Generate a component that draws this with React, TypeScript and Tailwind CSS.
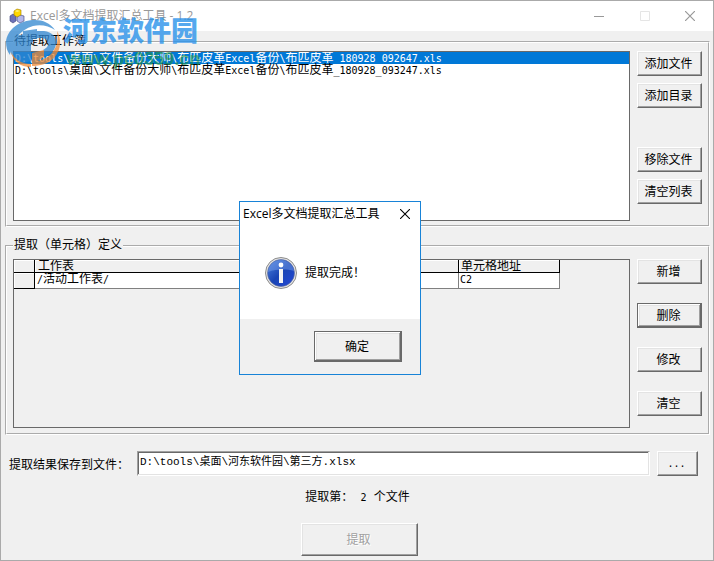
import { Fragment, useState } from "react";
import clsx from "clsx";

const FILES = [
  "D:\\tools\\桌面\\文件备份大师\\布匹皮革Excel备份\\布匹皮革_180928_092647.xls",
  "D:\\tools\\桌面\\文件备份大师\\布匹皮革Excel备份\\布匹皮革_180928_093247.xls",
];

const uiFont =
  "font-['Open_Sans','Noto_Sans_CJK_SC',sans-serif] text-xs leading-4";

// Latin glyphs are half the width of the Chinese ones
function MonoText({ text }: { text: string }) {
  return text.split(/([\x21-\x7e]+)/).map((part, i) =>
    i % 2 ? (
      <span key={i} className="font-['DejaVu_Sans_Mono',monospace] text-[10px]">
        {part}
      </span>
    ) : (
      <Fragment key={i}>{part}</Fragment>
    ),
  );
}

interface PushButtonProps {
  text: string;
  classNames?: string;
  focused?: boolean;
  disabled?: boolean;
}

function PushButton({ text, classNames, focused, disabled }: PushButtonProps) {
  return (
    <button
      type="button"
      disabled={disabled}
      className={clsx(
        "shrink-0 border bg-[#f0f0f0] pr-0.5",
        focused
          ? "border-[#696969] shadow-[inset_-1px_-1px_#696969,inset_1px_1px_#fff,inset_-2px_-2px_#a0a0a0,inset_2px_2px_#e3e3e3]"
          : "border-t-white border-r-[#696969] border-b-[#696969] border-l-white shadow-[inset_-1px_-1px_#a0a0a0,inset_1px_1px_#e3e3e3]",
        disabled && "text-[#a0a0a0] [text-shadow:1px_1px_#fff]",
        classNames,
      )}
    >
      {text}
    </button>
  );
}

function AppIcon() {
  return (
    <svg viewBox="0 0 16 16" className="h-4 w-4" aria-hidden="true">
      <path d="M1 8l3-2 3 2v5l-3 2-3-2z" fill="#6d72b8" stroke="#3b3f78" strokeWidth=".6" />
      <path d="M8 9l3-2 4 1v5l-4 2-3-2z" fill="#b4b8ea" stroke="#3b3f78" strokeWidth=".6" />
      <path d="M5 3l3-2 4 1v5L8 9 5 7z" fill="#ffd800" stroke="#a07800" strokeWidth=".6" />
      <path d="M6 3l2-1 3 1-3 1z" fill="#fff27a" />
    </svg>
  );
}

function TitleBar() {
  return (
    <header className="flex h-[30px] items-center bg-white pl-2 text-[#999]">
      <AppIcon />
      <h1 className={clsx(uiFont, "ml-[5px] grow")}>
        Excel多文档提取汇总工具 - 1.2
      </h1>
      <button type="button" aria-label="最小化" className="flex h-full w-[46px] items-center justify-center">
        <svg viewBox="0 0 10 10" className="h-2.5 w-2.5" stroke="#999">
          <path d="M0 5.5h10" />
        </svg>
      </button>
      <button type="button" aria-label="最大化" disabled className="flex h-full w-[45px] items-center justify-center">
        <svg viewBox="0 0 10 10" className="h-2.5 w-2.5" fill="none" stroke="#e5e5e5">
          <path d="M.5 .5h9v9h-9z" />
        </svg>
      </button>
      <button type="button" aria-label="关闭" className="flex h-full w-[46px] items-center justify-center">
        <svg viewBox="0 0 10 10" className="h-2.5 w-2.5" stroke="#999" strokeWidth="1.2">
          <path d="M0 0l10 10M10 0L0 10" />
        </svg>
      </button>
    </header>
  );
}

function Watermark() {
  return (
    <div className="pointer-events-none absolute top-2.5 left-0 flex" aria-hidden="true">
      <svg viewBox="0 0 62 60" className="h-[60px] w-[62px] opacity-75">
        <path d="M34 9C18 9 6 19 5 31c0 5 1 9 4 13 1-14 10-25 23-29 8-2 16 0 22 4C49 12 42 9 34 9z" fill="#2f86d0" />
        <path d="M12 25l20-3v9l-8 2v20c-8-2-13-7-15-13 0-6 0-11 3-15z" fill="#2f86d0" />
        <path d="M22 20l14-2v10h-6v22l-8 2z" fill="#2f86d0" />
        <path d="M30 20h13c8 1 13 6 12 13-1 7-6 11-13 13v-7c4-2 6-5 5-8-1-3-4-4-8-4h-9z" fill="#2f86d0" />
        <path d="M56 20c5 9 4 19-3 27-6 6-14 8-22 8v-4c10-1 18-5 22-12 4-6 4-12 3-19z" fill="#f08a35" />
        <path d="M10 41c4 8 11 12 20 12v3C19 56 12 50 10 41z" fill="#f08a35" />
        <path d="M31 42l12-3v7l-12 8z" fill="#f08a35" />
      </svg>
      <div className="flex flex-col pt-1">
        <span className="font-['Noto_Sans_CJK_SC',sans-serif] text-[27px] leading-[30px] font-black text-[#2b93ea] opacity-80">
          河东软件园
        </span>
        <span className="mt-1 ml-1 font-['Liberation_Sans',sans-serif] text-lg leading-5 font-bold text-[#239245] opacity-60">
          www.pc0359.cn
        </span>
      </div>
    </div>
  );
}

function FileGroup() {
  const [selected, setSelected] = useState(0);

  return (
    <fieldset className="flex min-w-0 gap-[7px] border-2 border-white px-1.5 pt-[3px] pb-1 [border-style:groove]">
      <legend className="px-px leading-[13px]">待提取工作簿</legend>
      <ul
        role="listbox"
        aria-label="待提取工作簿"
        className="h-[170px] min-w-0 grow overflow-hidden border border-[#696969] bg-white leading-3"
      >
        {FILES.map((file, i) => (
          <li
            key={file}
            role="option"
            aria-selected={i === selected}
            onClick={() => setSelected(i)}
            className={clsx(
              "h-3 pl-px whitespace-nowrap",
              i === selected && "bg-[#0078d7] text-white",
            )}
          >
            <MonoText text={file} />
          </li>
        ))}
      </ul>
      <div className="flex w-[65px] shrink-0 flex-col gap-[7px]">
        <PushButton text="添加文件" classNames="h-[25px]" />
        <PushButton text="添加目录" classNames="h-[25px]" />
        <PushButton text="移除文件" classNames="mt-8 h-[25px]" />
        <PushButton text="清空列表" classNames="h-[25px]" />
      </div>
    </fieldset>
  );
}

function CellGroup() {
  return (
    <fieldset className="mt-3 flex min-w-0 gap-[7px] border-2 border-white px-1.5 pt-[7px] pb-[5px] [border-style:groove]">
      <legend className="px-px leading-[13px]">提取（单元格）定义</legend>
      <div className="h-[169px] min-w-0 grow overflow-hidden border border-[#696969]">
        <table className="table-fixed border-separate border-spacing-0 text-left leading-3">
          <colgroup>
            <col className="w-[21px]" />
            <col className="w-[424px]" />
            <col className="w-[101px]" />
          </colgroup>
          <thead>
            <tr className="h-[13px]">
              <th className="border-r border-b border-black p-0 shadow-[inset_1px_1px_#fff]" />
              <th className="border-r border-b border-black p-0 pl-[3px] font-normal shadow-[inset_1px_1px_#fff]">
                工作表
              </th>
              <th className="border-r border-b border-black p-0 pl-0.5 font-normal shadow-[inset_1px_1px_#fff]">
                单元格地址
              </th>
            </tr>
          </thead>
          <tbody>
            <tr className="h-4">
              <td className="border-r border-b border-black p-0 shadow-[inset_1px_1px_#fff]" />
              <td className="border-r border-b border-[#808080] bg-white p-0 pl-0.5 align-top">
                <MonoText text="/活动工作表/" />
              </td>
              <td className="border-r border-b border-[#808080] bg-white p-0 pl-px align-top">
                <MonoText text="C2" />
              </td>
            </tr>
          </tbody>
        </table>
      </div>
      <div className="flex w-[65px] shrink-0 flex-col gap-[19px]">
        <PushButton text="新增" classNames="h-[25px]" />
        <PushButton text="删除" classNames="h-[25px]" focused />
        <PushButton text="修改" classNames="h-[25px]" />
        <PushButton text="清空" classNames="h-[25px]" />
      </div>
    </fieldset>
  );
}

function InfoIcon() {
  return (
    <svg viewBox="0 0 32 32" className="h-8 w-8" aria-hidden="true">
      <defs>
        <linearGradient id="ball" x1="0" y1="0" x2="1" y2="1">
          <stop offset="0" stopColor="#4f84e0" />
          <stop offset=".5" stopColor="#1a45b4" />
          <stop offset="1" stopColor="#2247d8" />
        </linearGradient>
      </defs>
      <circle cx="16" cy="16" r="15.5" fill="#e4e4e4" stroke="#8c8c8c" />
      <circle cx="16" cy="16" r="13.5" fill="url(#ball)" stroke="#5a6a9a" strokeWidth=".6" />
      <path d="M3 15C4 7 10 3 16 3c7 0 12 5 13 11-8-2-17-2-26 1z" fill="#7ea6ee" opacity=".45" />
      <circle cx="16" cy="8" r="2.4" fill="#fff" />
      <path d="M14 12h4v14h-4z" fill="#f4f4f4" />
    </svg>
  );
}

function MessageDialog() {
  return (
    <div
      role="dialog"
      aria-labelledby="dialog-title"
      className={clsx(
        uiFont,
        "absolute top-[200px] left-[238px] flex w-[182px] flex-col border border-[#1883d7] bg-[#f0f0f0]",
      )}
    >
      <div className="flex h-6 items-center justify-between bg-white pl-[3px]">
        <h2 id="dialog-title" className="whitespace-nowrap">
          Excel多文档提取汇总工具
        </h2>
        <button type="button" aria-label="关闭" className="flex h-6 w-[31px] items-center justify-center">
          <svg viewBox="0 0 10 10" className="h-2.5 w-2.5" stroke="#000" strokeWidth="1.1">
            <path d="M0 0l10 10M10 0L0 10" />
          </svg>
        </button>
      </div>
      <div className="flex h-[93px] items-center gap-2 bg-white pl-[25px]">
        <InfoIcon />
        <p>提取完成！</p>
      </div>
      <div className="flex justify-end py-3 pr-[18px]">
        <PushButton text="确定" classNames="h-[31px] w-[88px]" focused />
      </div>
    </div>
  );
}

export default function App() {
  return (
    <div
      lang="zh-CN"
      className="relative flex min-h-screen flex-col border border-[#aaa] bg-[#f0f0f0] font-['DejaVu_Sans_Mono','Noto_Sans_CJK_SC',monospace] text-xs text-black"
    >
      <TitleBar />
      <main className="flex flex-col pt-1 pr-[3px] pb-1 pl-1">
        <FileGroup />
        <CellGroup />
        <div className="mt-4 flex items-center pr-3 pl-1">
          <label htmlFor="target" className="w-32 shrink-0 pt-[3px] whitespace-nowrap">
            提取结果保存到文件：
          </label>
          <input
            id="target"
            type="text"
            defaultValue="D:\tools\桌面\河东软件园\第三方.xlsx"
            className="h-[25px] min-w-0 grow border border-t-[#a0a0a0] border-r-white border-b-white border-l-[#a0a0a0] bg-white pb-2 pl-0.5 font-['Liberation_Mono','Noto_Sans_CJK_SC',monospace] text-[11px] shadow-[inset_-1px_-1px_#e3e3e3,inset_1px_1px_#696969]"
          />
          <PushButton text="..." classNames="ml-[7px] h-[25px] w-[41px] text-[10px]" />
        </div>
        <p className="mt-[15px] text-center leading-[13px]">
          提取第： <MonoText text="2" /> 个文件
        </p>
        <PushButton text="提取" classNames="mt-[19px] ml-1 h-[33px] w-[117px] self-center" disabled />
      </main>
      <MessageDialog />
      <Watermark />
    </div>
  );
}
